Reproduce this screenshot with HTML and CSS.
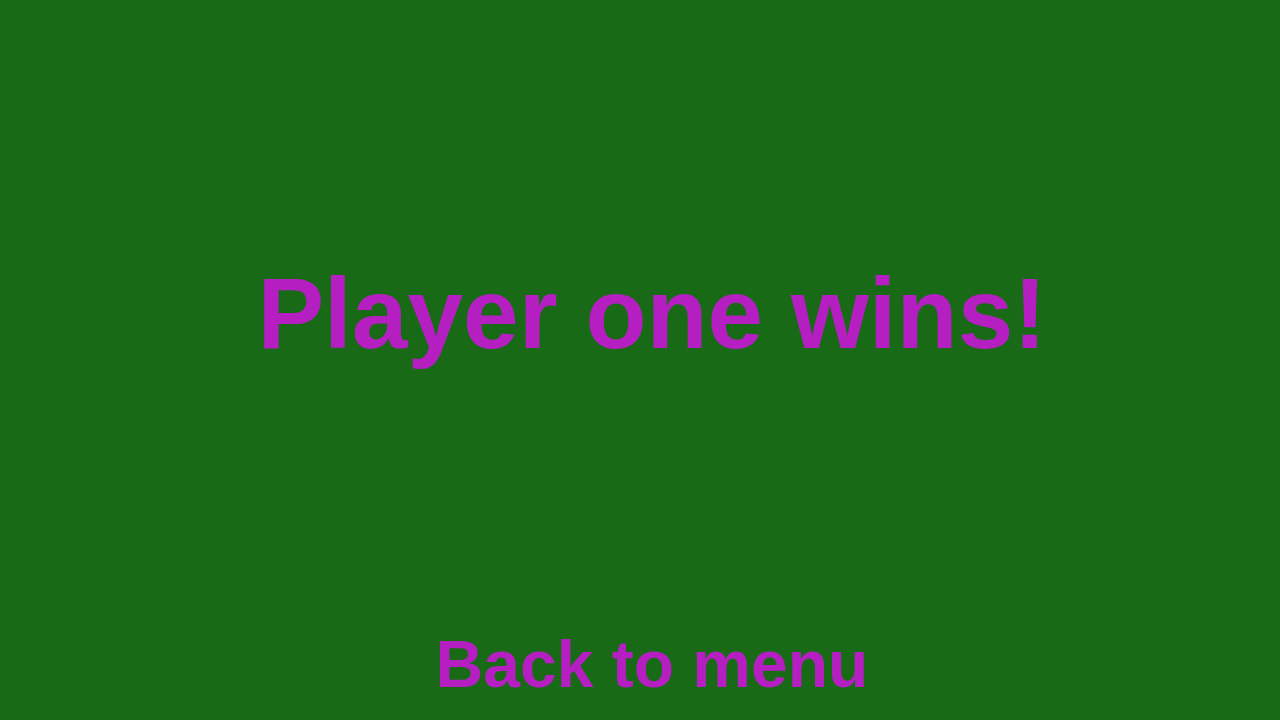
FILE: index.html
```html
<!DOCTYPE html>
<html>
<head>
<meta charset="utf-8">
<link rel="stylesheet" href="styles.css">
</head>
<body>
<div class="screen">
  <h1 class="title">Player one wins!</h1>
  <button class="back">Back to menu</button>
</div>
</body>
</html>
```
FILE: styles.css
```css
html, body {
  margin: 0;
  padding: 0;
  background: #186a17;
}
.screen {
  width: 1280px;
  height: 720px;
  box-sizing: border-box;
  padding: 263px 0 0 24px;
  display: flex;
  flex-direction: column;
  align-items: center;
  font-family: "Liberation Sans", Arial, sans-serif;
  font-weight: bold;
  color: #b51fc1;
  overflow: hidden;
}
.title {
  margin: 0;
  font-size: 100px;
  line-height: 100px;
  font-weight: bold;
}
.back {
  margin: 268px 0 0 0;
  padding: 0;
  border: 0;
  background: none;
  font-family: inherit;
  font-weight: bold;
  font-size: 66px;
  line-height: 66px;
  color: inherit;
}
```
